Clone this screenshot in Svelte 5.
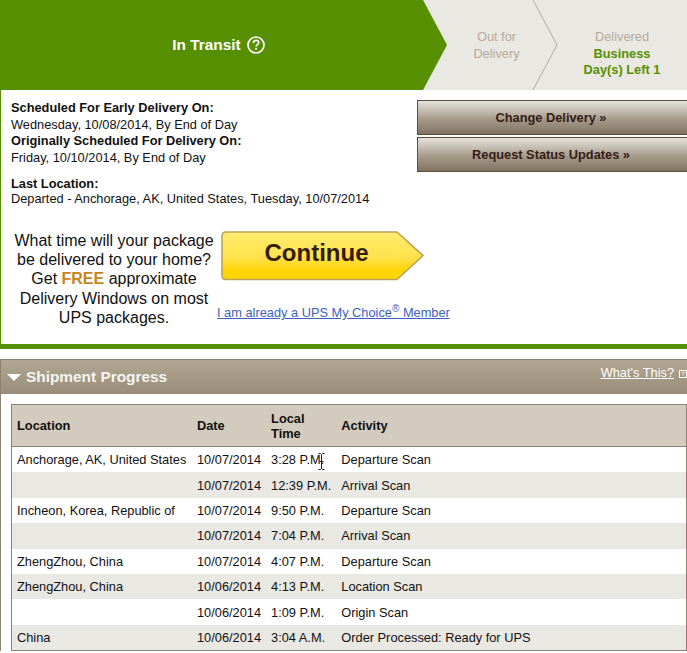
<script>
  const rows = [
    ["Anchorage, AK, United States", "10/07/2014", "3:28 P.M.", "Departure Scan"],
    ["", "10/07/2014", "12:39 P.M.", "Arrival Scan"],
    ["Incheon, Korea, Republic of", "10/07/2014", "9:50 P.M.", "Departure Scan"],
    ["", "10/07/2014", "7:04 P.M.", "Arrival Scan"],
    ["ZhengZhou, China", "10/07/2014", "4:07 P.M.", "Departure Scan"],
    ["ZhengZhou, China", "10/06/2014", "4:13 P.M.", "Location Scan"],
    ["", "10/06/2014", "1:09 P.M.", "Origin Scan"],
    ["China", "10/06/2014", "3:04 A.M.", "Order Processed: Ready for UPS"]
  ];
</script>

<div class="page">
  <div class="tracker">
    <svg class="arrows" width="687" height="90" viewBox="0 0 687 90" aria-hidden="true">
      <polygon points="0,0 423,0 447,45 423,90 0,90" fill="#568f00" />
      <polyline points="533,0 557,45 533,90" fill="none" stroke="#b5aa9c" stroke-width="1" />
    </svg>
    <div class="step current">
      <span>In Transit</span>
      <svg width="20" height="20" viewBox="0 0 20 20" aria-hidden="true">
        <circle cx="10" cy="10" r="8" fill="none" stroke="#fff" stroke-width="1.7" />
        <path d="M7.4 8c0-1.600 1.100-2.600 2.700-2.600s2.600 1 2.600 2.300c0 1.900-2.600 1.900-2.600 3.800" fill="none" stroke="#fff" stroke-width="1.700" />
        <rect x="9.200" y="12.800" width="1.800" height="1.900" fill="#fff" />
      </svg>
    </div>
    <div class="step next">Out for<br />Delivery</div>
    <div class="step last">Delivered<br /><b>Business<br />Day(s) Left 1</b></div>
  </div>

  <div class="summary">
    <div class="top">
      <div class="dates">
        <strong>Scheduled For Early Delivery On:</strong>
        <div>Wednesday, 10/08/2014, By End of Day</div>
        <strong>Originally Scheduled For Delivery On:</strong>
        <div>Friday, 10/10/2014, By End of Day</div>
        <strong class="loc">Last Location:</strong>
        <div class="dep">Departed - Anchorage, AK, United States, Tuesday, 10/07/2014</div>
      </div>
      <div class="actions">
        <div class="btn">Change Delivery »</div>
        <div class="btn">Request Status Updates »</div>
      </div>
    </div>
    <div class="promo">
      <p>What time will your package<br />be delivered to your home?<br />Get <b>FREE</b> approximate<br />Delivery Windows on most<br />UPS packages.</p>
      <div class="cta">
        <div class="continue">
          <svg width="205" height="50" viewBox="0 0 205 50" aria-hidden="true">
            <defs>
              <linearGradient id="yl" x1="0" y1="0" x2="0" y2="1">
                <stop offset="0" stop-color="#ffec70" />
                <stop offset="0.55" stop-color="#ffe14a" />
                <stop offset="0.8" stop-color="#ffd608" />
                <stop offset="1" stop-color="#ffd400" />
              </linearGradient>
            </defs>
            <path d="M5 1H176L202 24.500L176 48.500H5Q1 48.500 1 45V5Q1 1 5 1Z" fill="url(#yl)" stroke="#b9a35c" stroke-width="1.600" />
          </svg>
          <span>Continue</span>
        </div>
        <div class="member"><span class="link">I am already a UPS My Choice<sup>®</sup> Member</span></div>
      </div>
    </div>
  </div>

  <div class="progress">
    <div class="bar">
      <div class="title"><i class="tri"></i>Shipment Progress</div>
      <div class="whats"><span>What's This?</span><i class="q">?</i></div>
    </div>
    <div class="body">
      <table>
        <thead>
          <tr><th class="c1">Location</th><th class="c2">Date</th><th class="c3">Local<br />Time</th><th>Activity</th></tr>
        </thead>
        <tbody>
          {#each rows as r}
            <tr><td>{r[0]}</td><td>{r[1]}</td><td>{r[2]}</td><td>{r[3]}</td></tr>
          {/each}
        </tbody>
      </table>
    </div>
  </div>

  <svg class="ibeam" width="7" height="17" viewBox="0 0 7 17" aria-hidden="true">
    <path d="M0.500 0.500H2.500L3.500 1.500L4.500 0.500H6.500M3.500 1.500V15.500M0.500 16.500H2.500L3.500 15.500L4.500 16.500H6.500M1.500 8.500H5.500" fill="none" stroke="#222" stroke-width="1" />
  </svg>
</div>

<style>
  :global(body) { margin: 0; background: #fff; }
  .page {
    position: relative;
    width: 687px;
    height: 653px;
    overflow: hidden;
    font-family: "Liberation Sans", Arial, sans-serif;
    font-size: 12.800px;
    color: #111;
  }
  .tracker {
    position: relative;
    display: flex;
    height: 90px;
    background: #e9e8e3;
  }
  .arrows { position: absolute; left: 0; top: 0; }
  .step { position: relative; display: flex; align-items: center; justify-content: center; text-align: center; }
  .current { width: 447px; gap: 5px; color: #fff; font-size: 15.400px; font-weight: bold; padding-right: 9px; box-sizing: border-box; }
  .next { width: 100px; color: #b5aa9c; line-height: 17px; padding-right: 1px; box-sizing: border-box; }
  .last { flex: 1; color: #b5aa9c; line-height: 16.600px; padding: 29px 0 0 10px; display: block; }
  .last b { color: #568f00; }

  .summary {
    height: 254px;
    border-left: 1px solid #568f00;
    border-bottom: 5px solid #568f00;
  }
  .top { display: flex; justify-content: space-between; height: 130px; }
  .dates { padding: 10px 0 0 10px; line-height: 16.600px; }
  .dates strong { display: block; }
  .dates .loc { margin-top: 10px; }
  .dates .dep { line-height: 15.500px; margin-top: -2px; }
  .actions { display: flex; flex-direction: column; gap: 2px; padding-top: 10px; width: 270px; }
  .btn {
    box-sizing: border-box;
    height: 35px;
    display: flex;
    align-items: center;
    justify-content: center;
    border: 1px solid #5f4f39;
    border-right: 0;
    padding-right: 3px;
    background: linear-gradient(#e6e3dd, #a69b8a 55%, #817362);
    color: #351c15;
    font-weight: bold;
    font-size: 12.800px;
  }
  .promo { display: flex; }
  .promo p {
    margin: 11px 0 0 10px;
    width: 206px;
    text-align: center;
    font-size: 16px;
    line-height: 19.200px;
    color: #111;
    white-space: nowrap;
  }
  .promo p b { color: #c8841a; }
  .continue { position: relative; width: 205px; height: 50px; margin: 11px 0 0 4px; }
  .continue svg { display: block; }
  .continue span {
    position: absolute;
    left: 0; right: 14px; top: 8px;
    text-align: center;
    font-size: 24px;
    line-height: 28px;
    font-weight: bold;
    color: #351c05;
  }
  .member { margin-top: 24px; }
  .link { color: #3d5fc4; text-decoration: underline; font-size: 12.800px; line-height: 16px; }
  .link sup { font-size: 10px; line-height: 0; }

  .progress { margin-top: 10px; }
  .bar {
    box-sizing: border-box;
    height: 35px;
    display: flex;
    justify-content: space-between;
    border-top: 1px solid #8d8271;
    border-left: 1px solid #8d8271;
    background: linear-gradient(#b1a793, #998d7a);
    color: #fff;
  }
  .title { display: flex; align-items: center; gap: 5px; font-size: 15.400px; font-weight: bold; padding-left: 6px; color: #f6f4f0; }
  .tri { width: 0; height: 0; border-left: 7px solid transparent; border-right: 7px solid transparent; border-top: 7px solid #fff; }
  .whats { display: flex; align-items: flex-start; gap: 5px; font-size: 12.800px; padding-top: 5px; line-height: 16px; }
  .whats span { text-decoration: underline; }
  .q { box-sizing: border-box; width: 8px; height: 8px; margin-top: 5px; border: 1px solid #fff; font-size: 6px; line-height: 6px; font-style: normal; text-align: center; }
  .body { border-left: 1px solid #8d8271; padding: 10px 0 0 10px; }
  table {
    width: 676px;
    box-sizing: border-box;
    border-collapse: collapse;
    border: 1px solid #8d8271;
    font-size: 12.800px;
  }
  th {
    height: 41px;
    padding: 0 5px;
    text-align: left;
    background: #d3cbbe;
    border-bottom: 1px solid #8d8271;
    line-height: 15px;
    font-size: 12.800px;
  }
  td { height: 25.400px; padding: 0 5px; white-space: nowrap; }
  tbody tr:nth-child(even) td { background: #e9e8e3; }
  .c1 { width: 170px; }
  .c2 { width: 64px; }
  .c3 { width: 60px; }
  .ibeam { position: absolute; left: 318px; top: 453px; }
</style>
